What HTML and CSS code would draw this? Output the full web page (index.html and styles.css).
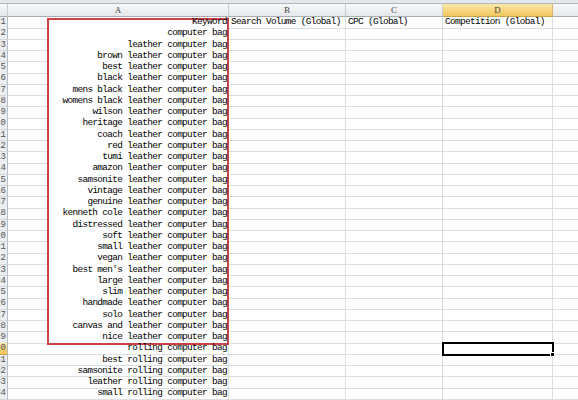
FILE: index.html
```html
<!DOCTYPE html>
<html>
<head>
<meta charset="utf-8">
<link rel="stylesheet" href="styles.css">
</head>
<body>
<div class="topbar"></div>
<div class="sheet">
  <div class="row head">
    <div class="corner"></div>
    <div class="ch">A</div>
    <div class="ch">B</div>
    <div class="ch">C</div>
    <div class="ch active">D</div>
    <div class="ch">E</div>
  </div>
  <div class="row"><div class="rh">1</div><div class="c a"><span>Keyword</span></div><div class="c">Search Volume (Global)</div><div class="c">CPC (Global)</div><div class="c">Competition (Global)</div><div class="c"></div></div>
  <div class="row"><div class="rh">2</div><div class="c a"><span>computer bag</span></div><div class="c"></div><div class="c"></div><div class="c"></div><div class="c"></div></div>
  <div class="row"><div class="rh">3</div><div class="c a"><span>leather computer bag</span></div><div class="c"></div><div class="c"></div><div class="c"></div><div class="c"></div></div>
  <div class="row"><div class="rh">4</div><div class="c a"><span>brown leather computer bag</span></div><div class="c"></div><div class="c"></div><div class="c"></div><div class="c"></div></div>
  <div class="row"><div class="rh">5</div><div class="c a"><span>best leather computer bag</span></div><div class="c"></div><div class="c"></div><div class="c"></div><div class="c"></div></div>
  <div class="row"><div class="rh">6</div><div class="c a"><span>black leather computer bag</span></div><div class="c"></div><div class="c"></div><div class="c"></div><div class="c"></div></div>
  <div class="row"><div class="rh">7</div><div class="c a"><span>mens black leather computer bag</span></div><div class="c"></div><div class="c"></div><div class="c"></div><div class="c"></div></div>
  <div class="row"><div class="rh">8</div><div class="c a"><span>womens black leather computer bag</span></div><div class="c"></div><div class="c"></div><div class="c"></div><div class="c"></div></div>
  <div class="row"><div class="rh">9</div><div class="c a"><span>wilson leather computer bag</span></div><div class="c"></div><div class="c"></div><div class="c"></div><div class="c"></div></div>
  <div class="row"><div class="rh">10</div><div class="c a"><span>heritage leather computer bag</span></div><div class="c"></div><div class="c"></div><div class="c"></div><div class="c"></div></div>
  <div class="row"><div class="rh">11</div><div class="c a"><span>coach leather computer bag</span></div><div class="c"></div><div class="c"></div><div class="c"></div><div class="c"></div></div>
  <div class="row"><div class="rh">12</div><div class="c a"><span>red leather computer bag</span></div><div class="c"></div><div class="c"></div><div class="c"></div><div class="c"></div></div>
  <div class="row"><div class="rh">13</div><div class="c a"><span>tumi leather computer bag</span></div><div class="c"></div><div class="c"></div><div class="c"></div><div class="c"></div></div>
  <div class="row"><div class="rh">14</div><div class="c a"><span>amazon leather computer bag</span></div><div class="c"></div><div class="c"></div><div class="c"></div><div class="c"></div></div>
  <div class="row"><div class="rh">15</div><div class="c a"><span>samsonite leather computer bag</span></div><div class="c"></div><div class="c"></div><div class="c"></div><div class="c"></div></div>
  <div class="row"><div class="rh">16</div><div class="c a"><span>vintage leather computer bag</span></div><div class="c"></div><div class="c"></div><div class="c"></div><div class="c"></div></div>
  <div class="row"><div class="rh">17</div><div class="c a"><span>genuine leather computer bag</span></div><div class="c"></div><div class="c"></div><div class="c"></div><div class="c"></div></div>
  <div class="row"><div class="rh">18</div><div class="c a"><span>kenneth cole leather computer bag</span></div><div class="c"></div><div class="c"></div><div class="c"></div><div class="c"></div></div>
  <div class="row"><div class="rh">19</div><div class="c a"><span>distressed leather computer bag</span></div><div class="c"></div><div class="c"></div><div class="c"></div><div class="c"></div></div>
  <div class="row"><div class="rh">20</div><div class="c a"><span>soft leather computer bag</span></div><div class="c"></div><div class="c"></div><div class="c"></div><div class="c"></div></div>
  <div class="row"><div class="rh">21</div><div class="c a"><span>small leather computer bag</span></div><div class="c"></div><div class="c"></div><div class="c"></div><div class="c"></div></div>
  <div class="row"><div class="rh">22</div><div class="c a"><span>vegan leather computer bag</span></div><div class="c"></div><div class="c"></div><div class="c"></div><div class="c"></div></div>
  <div class="row"><div class="rh">23</div><div class="c a"><span>best men's leather computer bag</span></div><div class="c"></div><div class="c"></div><div class="c"></div><div class="c"></div></div>
  <div class="row"><div class="rh">24</div><div class="c a"><span>large leather computer bag</span></div><div class="c"></div><div class="c"></div><div class="c"></div><div class="c"></div></div>
  <div class="row"><div class="rh">25</div><div class="c a"><span>slim leather computer bag</span></div><div class="c"></div><div class="c"></div><div class="c"></div><div class="c"></div></div>
  <div class="row"><div class="rh">26</div><div class="c a"><span>handmade leather computer bag</span></div><div class="c"></div><div class="c"></div><div class="c"></div><div class="c"></div></div>
  <div class="row"><div class="rh">27</div><div class="c a"><span>solo leather computer bag</span></div><div class="c"></div><div class="c"></div><div class="c"></div><div class="c"></div></div>
  <div class="row"><div class="rh">28</div><div class="c a"><span>canvas and leather computer bag</span></div><div class="c"></div><div class="c"></div><div class="c"></div><div class="c"></div></div>
  <div class="row"><div class="rh">29</div><div class="c a"><span>nice leather computer bag</span></div><div class="c"></div><div class="c"></div><div class="c"></div><div class="c"></div></div>
  <div class="row"><div class="rh hl">30</div><div class="c a"><span>rolling computer bag</span></div><div class="c"></div><div class="c"></div><div class="c sel"></div><div class="c"></div></div>
  <div class="row"><div class="rh">31</div><div class="c a"><span>best rolling computer bag</span></div><div class="c"></div><div class="c"></div><div class="c"></div><div class="c"></div></div>
  <div class="row"><div class="rh">32</div><div class="c a"><span>samsonite rolling computer bag</span></div><div class="c"></div><div class="c"></div><div class="c"></div><div class="c"></div></div>
  <div class="row"><div class="rh">33</div><div class="c a"><span>leather rolling computer bag</span></div><div class="c"></div><div class="c"></div><div class="c"></div><div class="c"></div></div>
  <div class="row"><div class="rh">34</div><div class="c a"><span>small rolling computer bag</span></div><div class="c"></div><div class="c"></div><div class="c"></div><div class="c"></div></div>
  <div class="row"><div class="rh">35</div><div class="c a"><span></span></div><div class="c"></div><div class="c"></div><div class="c"></div><div class="c"></div></div>
  <div class="shape"></div>
</div>
</body>
</html>
```

FILE: styles.css
```css
html, body {
  margin: 0;
  padding: 0;
  background: #fff;
  overflow: hidden;
}
body {
  width: 578px;
  height: 400px;
  font-family: "Liberation Mono", "DejaVu Sans Mono", monospace;
  color: #000;
}
.topbar {
  height: 3px;
  background: #e4e7eb;
  border-bottom: 1px solid #b3b8c0;
}
.sheet {
  position: relative;
}
.row {
  display: grid;
  grid-template-columns: 8px 221px 117px 97px 110px 80px;
  height: 11.25px;
}
.row.head {
  height: 13px;
}
.corner,
.ch {
  box-sizing: border-box;
  background: linear-gradient(#f7f8f9, #e5e8eb);
  border-right: 1px solid #c9ccd1;
  border-bottom: 1px solid #a9aeb6;
}
.ch {
  font-family: "Liberation Serif", serif;
  font-size: 9px;
  line-height: 12px;
  text-align: center;
  color: #444;
}
.ch.active {
  background: linear-gradient(#fae9a8, #f3c65d);
  border-bottom-color: #c9a44c;
  border-right-color: #d6b870;
}
.rh {
  box-sizing: border-box;
  display: flex;
  justify-content: flex-end;
  overflow: hidden;
  background: #eceef1;
  border-right: 1px solid #b9bec6;
  border-bottom: 1px solid #d4d7dc;
  font-size: 9px;
  line-height: 10.5px;
  color: #555;
  padding-right: 1px;
  white-space: nowrap;
}
.rh.hl {
  background: linear-gradient(#fae5a0, #f3c35a);
  border-bottom-color: #c9a44c;
}
.c {
  box-sizing: border-box;
  border-right: 1px solid #dcdee1;
  border-bottom: 1px solid #dcdee1;
  font-size: 9.4px;
  letter-spacing: -0.64px;
  line-height: 10.5px;
  white-space: nowrap;
  padding: 0 1px 0 2px;
}
.c.a {
  text-align: right;
}
.c.a span {
  position: relative;
  z-index: 2;
}
.sel {
  position: relative;
  outline: 2px solid #000;
  outline-offset: -1px;
  z-index: 3;
}
.sel::after {
  content: "";
  position: absolute;
  right: -3px;
  bottom: -3px;
  width: 3px;
  height: 3px;
  background: #000;
  border: 1px solid #fff;
}
.shape {
  position: absolute;
  left: 47px;
  top: 14px;
  width: 182px;
  height: 327px;
  box-sizing: border-box;
  border: 2px solid #c94545;
  background: #fff;
  z-index: 1;
}
```
